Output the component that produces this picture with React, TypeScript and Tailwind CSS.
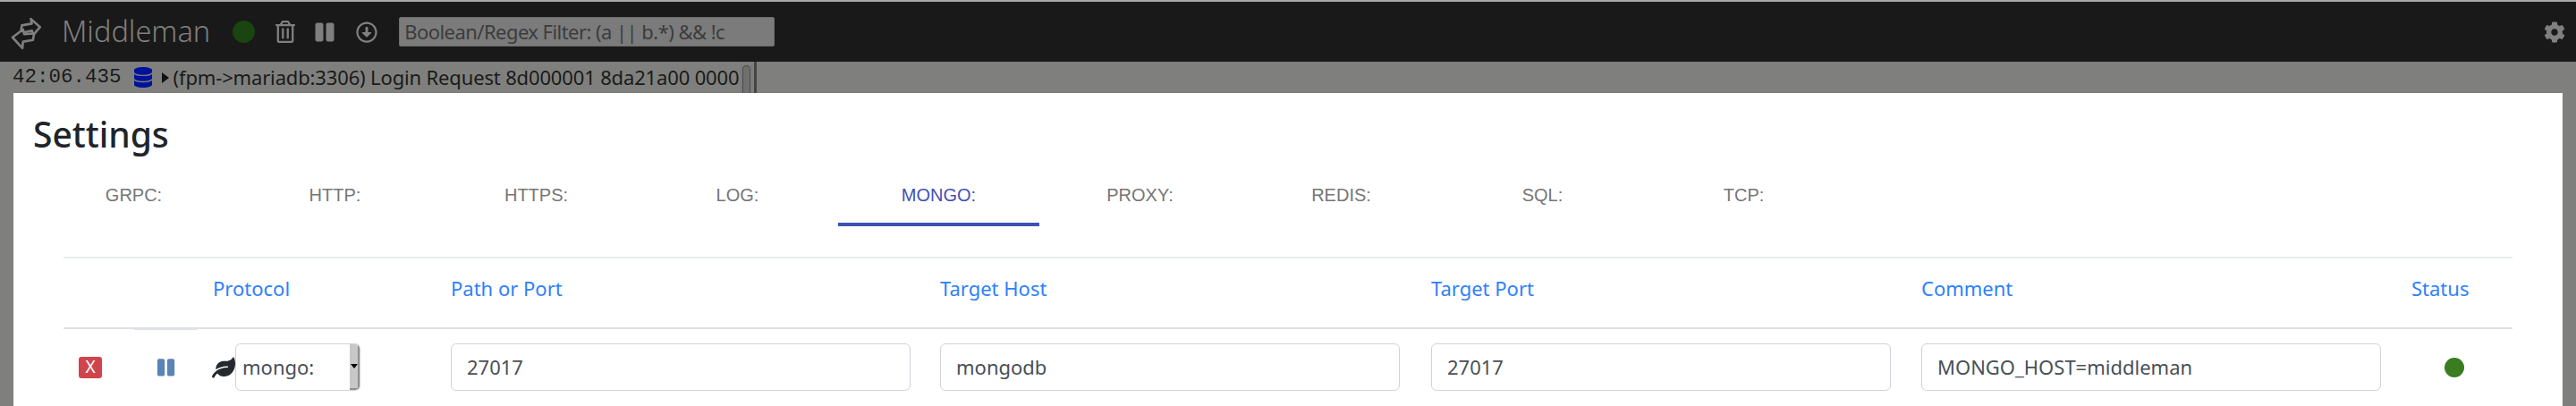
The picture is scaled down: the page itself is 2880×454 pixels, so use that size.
import { FaCog, FaDatabase, FaLeaf, FaPause, FaRegArrowAltCircleDown, FaRegTrashAlt } from "react-icons/fa";

const tabs = ["GRPC:", "HTTP:", "HTTPS:", "LOG:", "MONGO:", "PROXY:", "REDIS:", "SQL:", "TCP:"];

const Field = ({ value }: { value: string }) => (
	<div className="w-[514px] h-[53px] flex items-center px-[17px] bg-white border border-[#ced4da] rounded-[6px] text-[22px] text-[#495057]">
		{value}
	</div>
);

const Logo = () => (
	<svg viewBox="16 16 104 112" className="mt-[4px] w-[34px] h-[37px]" fill="#191919" stroke="#7f7f7f" strokeWidth="8" strokeLinejoin="round">
		<path d="M54 44 L88 38 L85 22 L116 50 L92 78 L89 62 L50 70 Z" />
		<path d="M96 72 L62 74 L58 58 L22 85 L56 122 L58 100 L92 94 Z" />
	</svg>
);

const App = () => {
	return (
		<div className="w-[2880px] h-[454px] overflow-hidden flex flex-col bg-[#7f807d] font-['Noto_Sans',sans-serif]">
			<div className="h-[69px] shrink-0 bg-[#191919] border-t-2 border-[#a8a8a8] flex items-center pl-3 pr-[12px] text-[#7f7f7f]">
				<Logo />
				<span className="ml-[23px] text-[32.5px] font-light leading-none">Middleman</span>
				<span className="ml-[25px] w-[25px] h-[25px] rounded-full bg-[#1a4410]" />
				<FaRegTrashAlt className="ml-[23px] w-[22px] h-[25px]" />
				<FaPause className="ml-[22px] w-[22px] h-[24px]" />
				<FaRegArrowAltCircleDown className="ml-6 w-[24px] h-[24px]" />
				<div className="ml-6 w-[420px] h-[33px] flex items-center px-[5px] bg-[#7b7b7b] border border-[#6e6e6e] rounded-[2px] text-[22px] tracking-[-0.55px] text-[#3c3c3c] whitespace-nowrap">
					Boolean/Regex Filter: (a || b.*) &amp;&amp; !c
				</div>
				<FaCog className="ml-auto w-[24px] h-[24px]" />
			</div>
			<div className="h-[35px] shrink-0 flex items-center pl-[14px] text-[#1a1a1a] text-[22.5px]">
				<span className="font-['Liberation_Mono',monospace]">42:06.435</span>
				<FaDatabase className="ml-[14px] w-[20px] h-[23px] text-[#00129a]" />
				<span className="ml-[11px] w-0 h-0 border-y-[6px] border-y-transparent border-l-[8px] border-l-[#111]" />
				<div className="ml-[5px] w-[634px] whitespace-nowrap text-[22px] tracking-[-0.15px]">
					(fpm-&gt;mariadb:3306) Login Request 8d000001 8da21a00 0000
				</div>
				<div className="self-stretch w-[13px] flex items-end justify-center border-x border-[#777]">
					<span className="w-[9px] h-[31px] bg-[#6f6f6f] border border-[#4a4a4a] border-b-0 rounded-t-[5px]" />
				</div>
				<span className="ml-[2px] w-[3px] self-stretch bg-[#444]" />
			</div>
			<div className="mx-[15px] flex-1 bg-white pt-[23px] px-[22px]">
				<h1 className="text-[39px] leading-[46px] font-medium text-[#212529]">Settings</h1>
				<div className="mt-[8px] flex text-[20px] text-[#767676] font-['Liberation_Sans',sans-serif]">
					{tabs.map((t) => (
						<div
							key={t}
							className={
								t === "MONGO:"
									? "w-[225px] h-[72px] pt-[6px] flex items-center justify-center border-b-[4px] border-[#3f51b5] text-[#3f51b5]"
									: "w-[225px] h-[72px] pt-[6px] flex items-center justify-center border-b-[4px] border-transparent"
							}
						>
							{t}
						</div>
					))}
				</div>
				<div className="mt-[34px] mx-[34px] border-t-2 border-[#e9ecef]">
					<div className="h-[79px] border-b-2 border-[#dee2e6] grid grid-cols-[79px_70px_265px_548px_549px_548px_548px_131px] items-center text-[22px] text-[#2f80fb]">
						<span />
						<span className="self-stretch border-b-2 border-[#dee2e6] -mb-[3px]" />
						<span className="pl-[18px] pb-[10px]">Protocol</span>
						<span className="pl-[19px] pb-[10px]">Path or Port</span>
						<span className="pl-[18px] pb-[10px]">Target Host</span>
						<span className="pl-[18px] pb-[10px]">Target Port</span>
						<span className="pl-[18px] pb-[10px]">Comment</span>
						<span className="pl-[18px] pb-[10px]">Status</span>
					</div>
					<div className="pt-[16px] grid grid-cols-[79px_70px_265px_548px_549px_548px_548px_131px] items-center">
						<div className="ml-[17px] w-[26px] h-[24px] flex items-center justify-center bg-[#d0444c] rounded-[3px] text-white text-[19px] leading-none">
							X
						</div>
						<FaPause className="ml-[25px] w-[21px] h-[22px] text-[#5a83b6]" />
						<div className="flex items-center pl-[17px]">
							<FaLeaf className="w-[26px] h-[24px] text-[#25282c]" />
							<div className="w-[140px] h-[53px] flex items-center justify-between pl-[7px] bg-white border border-[#ced4da] rounded-[6px] text-[22px] text-[#495057] overflow-hidden">
								mongo:
								<span className="w-[11px] h-full bg-[#c8c8c8] border-r-2 border-b-2 border-[#8f8f8f] flex items-center justify-center">
									<span className="w-0 h-0 border-x-[4px] border-x-transparent border-t-[5px] border-t-black" />
								</span>
							</div>
						</div>
						<div className="pl-[19px]">
							<Field value="27017" />
						</div>
						<div className="pl-[18px]">
							<Field value="mongodb" />
						</div>
						<div className="pl-[18px]">
							<Field value="27017" />
						</div>
						<div className="pl-[18px]">
							<Field value="MONGO_HOST=middleman" />
						</div>
						<span className="ml-[55px] w-[22px] h-[22px] rounded-full bg-[#3a7d20]" />
					</div>
				</div>
			</div>
		</div>
	);
};

export default App;
